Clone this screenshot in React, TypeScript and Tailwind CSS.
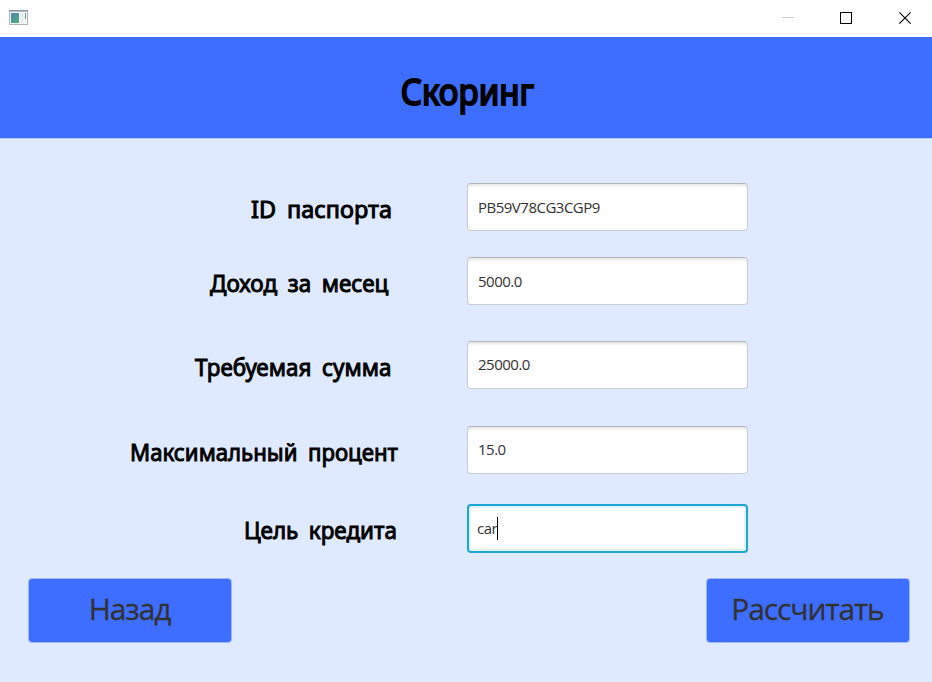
import React from "react";

type Field = {
  label: string;
  value: string;
  rowClass: string;
  labelClass: string;
  scaleClass: string;
  valueClass?: string;
  focused?: boolean;
};

const fields: Field[] = [
  { label: "ID паспорта", value: "PB59V78CG3CGP9", rowClass: "mt-[45px]", labelClass: "pl-[251px]", scaleClass: "scale-x-[0.977]" },
  { label: "Доход за месец", value: "5000.0", rowClass: "mt-[26px]", labelClass: "pl-[210px]", scaleClass: "scale-x-[0.937]" },
  { label: "Требуемая сумма", value: "25000.0", rowClass: "mt-[36px]", labelClass: "pl-[195px]", scaleClass: "scale-x-[0.936]", valueClass: "pb-[2px]" },
  { label: "Максимальный процент", value: "15.0", rowClass: "mt-[37px]", labelClass: "pl-[130px]", scaleClass: "scale-x-[0.926]", valueClass: "pb-[2px]" },
  { label: "Цель кредита", value: "car", rowClass: "mt-[30px]", labelClass: "pl-[244px]", scaleClass: "scale-x-[0.934]", valueClass: "pb-[2px]", focused: true },
];

function TitleBar() {
  return (
    <div className="flex h-[37px] shrink-0 items-start justify-between bg-white">
      <svg className="mt-[9px] ml-[9px]" width="20" height="17" viewBox="0 0 20 17" shapeRendering="crispEdges">
        <defs>
          <linearGradient id="pane" x1="0" y1="0" x2="1" y2="1">
            <stop offset="0" stopColor="#4a86b4" />
            <stop offset="1" stopColor="#4fae74" />
          </linearGradient>
        </defs>
        <rect x="0" y="1" width="19" height="15" fill="#b1b5ba" />
        <rect x="0" y="1" width="19" height="1" fill="#8f99a6" />
        <rect x="1" y="3" width="17" height="12" fill="#f5f6f7" />
        <rect x="2" y="4" width="8" height="10" fill="url(#pane)" />
        <rect x="11" y="4" width="4" height="10" fill="#ececee" />
        <rect x="16" y="4" width="1" height="6" fill="#5fa98c" />
      </svg>
      <svg width="162" height="37" viewBox="0 0 162 37" fill="none">
        <path d="M12 17.5h12" stroke="#cccccc" />
        <rect x="70.5" y="12.5" width="11" height="11" stroke="#000" />
        <path d="M129.4 12.4l11.2 11.2M140.6 12.4l-11.2 11.2" stroke="#000" strokeWidth="1.1" />
      </svg>
    </div>
  );
}

function FieldRow({ label, value, rowClass, labelClass, scaleClass, valueClass = "", focused }: Field) {
  return (
    <div className={`flex h-12 items-start ${rowClass}`}>
      <div className={`w-[467px] shrink-0 whitespace-nowrap pt-[10px] text-[24px] leading-[32px] font-normal text-black ${labelClass}`}>
        <span className={`inline-block origin-left [word-spacing:5px] [-webkit-text-stroke:1px_black] ${scaleClass}`}>{label}</span>
      </div>
      <div
        className={
          focused
            ? "flex h-[49px] w-[281px] items-center rounded-[4px] border-2 border-[#1ba5d3] bg-white pl-[8px] shadow-[inset_0_0_0_2px_#e0f3f9]"
            : "flex h-12 w-[281px] items-center rounded-[4px] border border-[#cbcccf] border-t-[#b5b5b8] bg-white pl-[10px] shadow-[inset_0_3px_3px_-1px_#e6e6e6]"
        }
      >
        <span className={`font-['Open_Sans','Noto_Sans',sans-serif] text-[15px] leading-[20px] tracking-[-0.5px] text-[#323232] ${valueClass}`}>{value}</span>
        {focused && <span className="h-[23px] w-px bg-black" />}
      </div>
    </div>
  );
}

function ActionButton({ children }: { children: React.ReactNode }) {
  return (
    <button className="h-[65px] w-[204px] rounded-[4px] border border-[#9db6ff] bg-[#3d6eff] pr-[1px] pb-[4px] font-['Open_Sans','Noto_Sans',sans-serif] text-[30px] leading-[40px] tracking-[-1.1px] text-[#323232] [-webkit-text-stroke:0.3px_#323232]">
      {children}
    </button>
  );
}

export default function App() {
  return (
    <div className="flex h-[682px] w-[932px] flex-col overflow-hidden bg-[#e0eaff] font-['Comic_Sans_MS','Noto_Sans',sans-serif]">
      <TitleBar />
      <header className="flex h-[102px] shrink-0 items-center justify-center border-b border-[#b4c6f8] bg-[#3d6eff] pt-[9px]">
        <h1 className="scale-x-[0.92] pl-[2px] text-[36px] leading-[48px] font-normal text-black [-webkit-text-stroke:2px_black]">Скоринг</h1>
      </header>
      <main className="-mt-px flex flex-1 flex-col">
        {fields.map((field) => (
          <FieldRow key={field.label} {...field} />
        ))}
        <div className="mt-[26px] flex justify-between pr-[22px] pl-[28px]">
          <ActionButton>Назад</ActionButton>
          <ActionButton>Рассчитать</ActionButton>
        </div>
      </main>
    </div>
  );
}
